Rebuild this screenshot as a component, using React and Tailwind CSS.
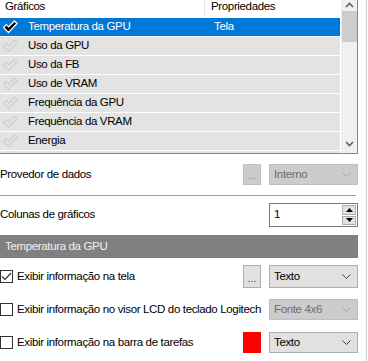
import React from "react";

const rows = [
  { name: "Temperatura da GPU", prop: "Tela", selected: true },
  { name: "Uso da GPU" },
  { name: "Uso da FB" },
  { name: "Uso de VRAM" },
  { name: "Frequência da GPU" },
  { name: "Frequência da VRAM" },
  { name: "Energia" },
  { name: "" },
];

const CheckIcon = ({ active }) => (
  <svg width="16" height="14" viewBox="0 0 16 14" className="shrink-0">
    <path
      d="M1.5 7.5 L4.5 4.5 L6.5 7 L12.5 1 L15 3.5 L6.5 12.5 Z"
      fill={active ? "#000" : "none"}
      stroke={active ? "#fff" : "#cfcfcf"}
      strokeWidth="1.2"
      strokeLinejoin="round"
    />
  </svg>
);

const Chevron = ({ color = "#444" }) => (
  <svg width="9" height="6" viewBox="0 0 9 6">
    <polyline points="0.5,0.5 4.5,4.5 8.5,0.5" fill="none" stroke={color} strokeWidth="1" />
  </svg>
);

const Combo = ({ label, disabled }) => (
  <div
    className={
      "ml-auto flex h-full w-[89px] items-center justify-between border pl-[4px] pr-[6px] " +
      (disabled ? "border-[#bfbfbf] bg-[#cccccc] text-[#6d6d6d]" : "border-[#adadad] bg-[#e1e1e1] text-black")
    }
  >
    <span>{label}</span>
    <Chevron color={disabled ? "#a8a8a8" : "#444"} />
  </div>
);

const DotsButton = ({ disabled }) => (
  <div
    className={
      "flex h-full w-[18px] items-end justify-center border pb-[3px] text-[10px] leading-none tracking-normal " +
      (disabled ? "border-[#bfbfbf] bg-[#cccccc] text-[#8d8d8d]" : "border-[#adadad] bg-[#e1e1e1] text-[#333]")
    }
  >
    ...
  </div>
);

const CheckBox = ({ checked }) => (
  <div className="flex h-[13px] w-[13px] shrink-0 items-center justify-center border border-[#333] bg-white">
    {checked && (
      <svg width="11" height="9" viewBox="0 0 11 9">
        <polyline points="1,4.5 4,7.5 10,1" fill="none" stroke="#333" strokeWidth="1.2" />
      </svg>
    )}
  </div>
);

export default function App() {
  return (
    <div
      className="relative flex h-[361px] w-[368px] overflow-hidden bg-white text-[11.5px] leading-none tracking-[-0.35px] text-black"
      style={{ fontFamily: '"Liberation Sans", Arial, sans-serif' }}
    >
      <div className="flex w-[366px] flex-col">
        {/* list */}
        <div className="flex h-[154px] w-[358px] border-b border-r border-[#828790]">
          <div className="w-[341px] overflow-hidden">
            <div className="flex h-[17px] items-start">
              <div className="h-[16px] w-[205px] border-r border-[#e5e5e5] pl-[5px] pt-[1px]">Gráficos</div>
              <div className="pl-[6px] pt-[1px]">Propriedades</div>
            </div>
            {rows.map((r, i) => (
              <div
                key={i}
                className={
                  "flex h-[19px] w-[340px] items-center border-t border-white " +
                  (r.selected ? "bg-[#0078d7] text-white" : "bg-[#e3e3e3]")
                }
              >
                <div className="flex w-[205px] items-center pl-[2px]">
                  {r.name && <CheckIcon active={r.selected} />}
                  <span className="pl-[10px]">{r.name}</span>
                </div>
                <div className="pl-[9px]">{r.prop}</div>
              </div>
            ))}
          </div>
          <div className="flex w-[16px] flex-col items-center bg-[#f0f0f0]">
            <svg width="9" height="6" viewBox="0 0 9 6" className="mt-[2px]">
              <polyline points="1,5 4.5,1.5 8,5" fill="none" stroke="#606060" strokeWidth="1.6" />
            </svg>
            <div className="mt-[3px] h-[31px] w-[15px] bg-[#cdcdcd]" />
            <svg width="9" height="6" viewBox="0 0 9 6" className="mt-auto mb-[6px]">
              <polyline points="1,1 4.5,4.5 8,1" fill="none" stroke="#606060" strokeWidth="1.6" />
            </svg>
          </div>
        </div>

        {/* provider */}
        <div className="mt-[10px] flex h-[21px] w-[358px] items-center">
          <span>Provedor de dados</span>
          <div className="ml-auto flex h-full items-stretch">
            <DotsButton disabled />
            <div className="w-[8px]" />
            <Combo label="Interno" disabled />
          </div>
        </div>

        <div className="mt-[10px] h-px w-[356px] bg-[#a0a0a0]" />

        {/* columns */}
        <div className="mt-[7px] flex h-[24px] w-[358px] items-center">
          <span>Colunas de gráficos</span>
          <div className="ml-auto flex h-full w-[89px] border border-[#7a7a7a] bg-white">
            <span className="flex-1 pl-[4px] pt-[5px]">1</span>
            <div className="flex w-[16px] flex-col gap-px bg-white p-px">
              <div className="flex flex-1 items-center justify-center border border-[#adadad] bg-[#e1e1e1]">
                <svg width="7" height="4" viewBox="0 0 7 4"><polygon points="0,4 3.5,0 7,4" fill="#000" /></svg>
              </div>
              <div className="flex flex-1 items-center justify-center border border-[#adadad] bg-[#e1e1e1]">
                <svg width="7" height="4" viewBox="0 0 7 4"><polygon points="0,0 3.5,4 7,0" fill="#000" /></svg>
              </div>
            </div>
          </div>
        </div>

        {/* section header */}
        <div className="mt-[8px] flex h-[23px] w-[358px] items-center bg-[#808080] pl-[5px] text-[#f0f0f0]">
          Temperatura da GPU
        </div>

        {/* options */}
        <div className="mt-[7px] flex h-[23px] w-[358px] items-center">
          <CheckBox checked />
          <span className="pl-[4px]">Exibir informação na tela</span>
          <div className="ml-auto flex h-full items-stretch">
            <DotsButton />
            <div className="w-[8px]" />
            <Combo label="Texto" />
          </div>
        </div>

        <div className="mt-[11px] flex h-[21px] w-[358px] items-center">
          <CheckBox />
          <span className="whitespace-nowrap pl-[4px]">Exibir informação no visor LCD do teclado Logitech</span>
          <div className="ml-auto flex h-full items-stretch">
            <Combo label="Fonte 4x6" disabled />
          </div>
        </div>

        <div className="mt-[12px] flex h-[21px] w-[358px] items-center">
          <CheckBox />
          <span className="pl-[4px]">Exibir informação na barra de tarefas</span>
          <div className="ml-auto flex h-full items-stretch">
            <div className="w-[18px] bg-[#ff0000]" />
            <div className="w-[8px]" />
            <Combo label="Texto" />
          </div>
        </div>
      </div>
      <div className="h-full w-px bg-[#d0d0d0]" />
    </div>
  );
}
